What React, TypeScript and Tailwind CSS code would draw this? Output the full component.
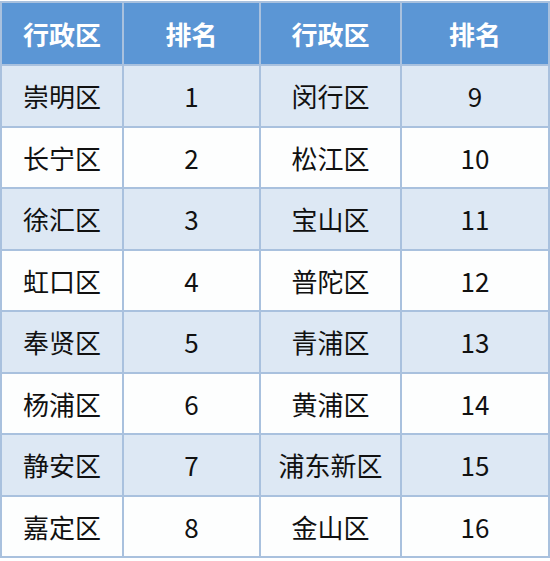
const rows: [string, number, string, number][] = [
  ["崇明区", 1, "闵行区", 9],
  ["长宁区", 2, "松江区", 10],
  ["徐汇区", 3, "宝山区", 11],
  ["虹口区", 4, "普陀区", 12],
  ["奉贤区", 5, "青浦区", 13],
  ["杨浦区", 6, "黄浦区", 14],
  ["静安区", 7, "浦东新区", 15],
  ["嘉定区", 8, "金山区", 16],
];

export default function App() {
  const font = { fontFamily: '"Noto Sans CJK SC", "Noto Sans", sans-serif' };
  return (
    <div className="w-[550px] h-[561px] bg-white pt-[1px]" style={font}>
      <table className="border-collapse table-fixed w-[548px] text-center">
        <colgroup>
          <col className="w-[122px]" />
          <col className="w-[137px]" />
          <col className="w-[141px]" />
          <col className="w-[148px]" />
        </colgroup>
        <thead>
          <tr className="h-[63px] bg-[#5b96d5] text-white font-bold text-[26px]">
            {["行政区", "排名", "行政区", "排名"].map((h, i) => (
              <th key={i} className="border-2 border-[#a9c1de] p-0">
                {h}
              </th>
            ))}
          </tr>
        </thead>
        <tbody>
          {rows.map((r, i) => (
            <tr
              key={i}
              className={`h-[61.5px] text-[26px] text-[#111111] ${i % 2 === 0 ? "bg-[#dde8f4]" : "bg-[#fdfefe]"}`}
            >
              {r.map((c, j) => (
                <td key={j} className="border-2 border-[#a9c1de] p-0">
                  {c}
                </td>
              ))}
            </tr>
          ))}
        </tbody>
      </table>
    </div>
  );
}
